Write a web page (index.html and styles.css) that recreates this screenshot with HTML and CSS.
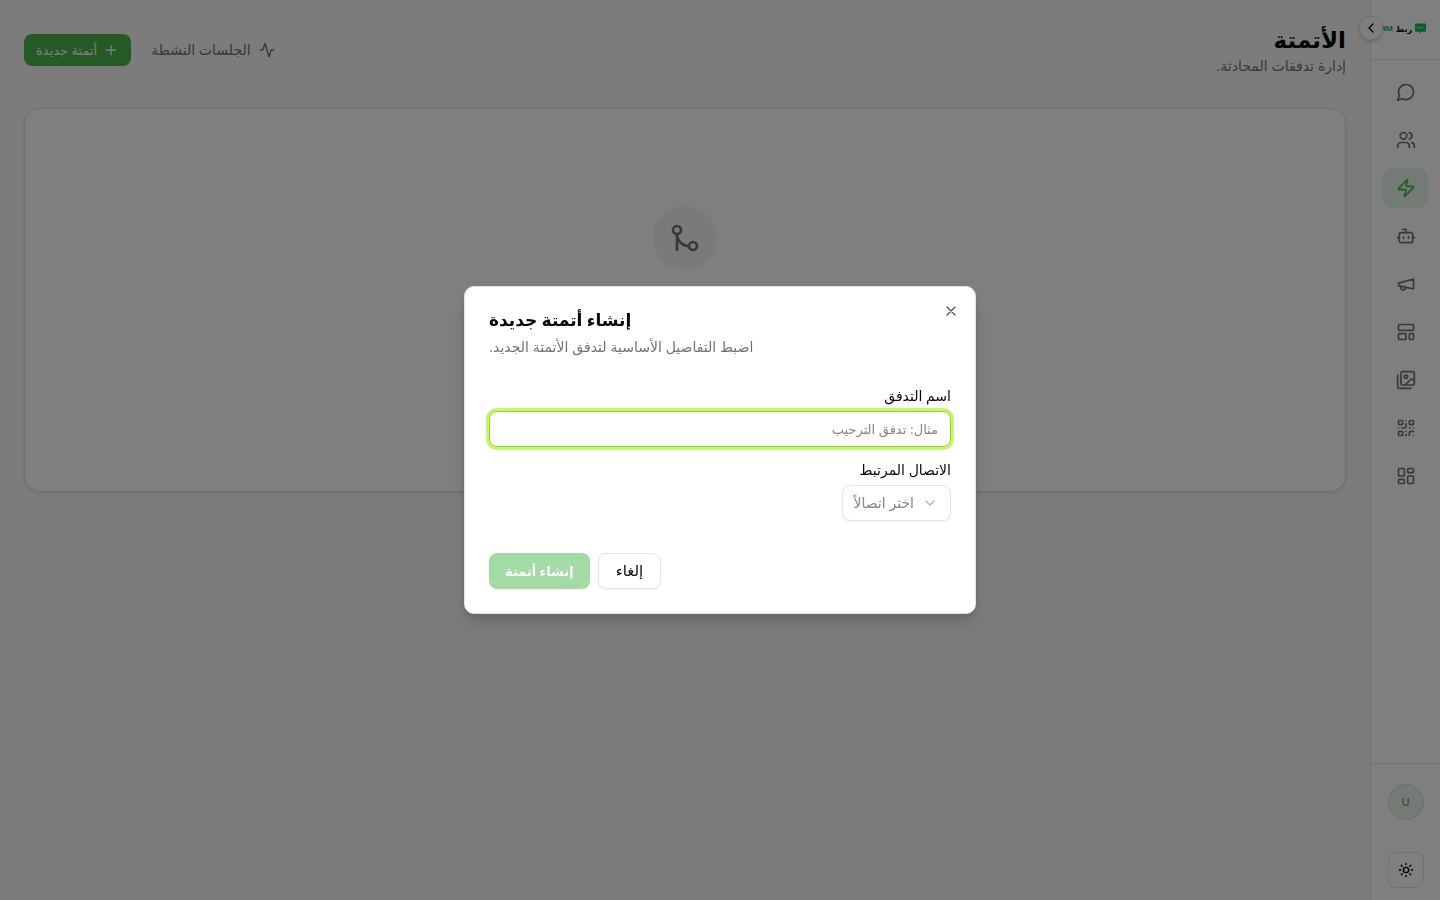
FILE: index.html
```html
<!DOCTYPE html>
<html lang="ar" dir="rtl">
<head>
<meta charset="utf-8">
<title>الأتمتة</title>
<link rel="stylesheet" href="styles.css">
</head>
<body>
<div class="app">
  <aside class="sidebar">
    <div class="brand">
      <svg class="brand-mark" width="11" height="12" viewBox="0 0 12 12"><path fill="#1ab65c" d="M1 0h10a1 1 0 0 1 1 1v7a1 1 0 0 1-1 1H6.500L4.500 11.500V9H1a1 1 0 0 1-1-1V1a1 1 0 0 1 1-1z"/><path stroke="#d8f5e3" stroke-width="1.500" stroke-dasharray="1.500 1" d="M2.500 4.500h7"/></svg>
      <span class="brand-name">ربط</span><span class="brand-suffix" dir="ltr">CRM</span>
    </div>
    <button class="collapse" aria-label="توسيع"><svg class="icon" width="16" height="16" viewBox="0 0 24 24"><path d="m15 18-6-6 6-6"/></svg></button>
    <nav class="nav">
      <a href="#" class="nav-item" aria-label="المحادثات"><svg class="icon" width="20" height="20" viewBox="0 0 24 24"><path d="M7.900 20A9 9 0 1 0 4 16.100L2 22Z"/></svg></a>
      <a href="#" class="nav-item" aria-label="جهات الاتصال"><svg class="icon" width="20" height="20" viewBox="0 0 24 24"><path d="M16 21v-2a4 4 0 0 0-4-4H6a4 4 0 0 0-4 4v2"/><circle cx="9" cy="7" r="4"/><path d="M22 21v-2a4 4 0 0 0-3-3.870M16 3.130a4 4 0 0 1 0 7.750"/></svg></a>
      <a href="#" class="nav-item active" aria-label="الأتمتة"><svg class="icon" width="20" height="20" viewBox="0 0 24 24"><path d="M4 14a1 1 0 0 1-.780-1.630l9.900-10.200a.5.5 0 0 1 .860.460l-1.920 6.020A1 1 0 0 0 13 10h7a1 1 0 0 1 .780 1.630l-9.900 10.200a.5.5 0 0 1-.860-.460l1.920-6.020A1 1 0 0 0 11 14z"/></svg></a>
      <a href="#" class="nav-item" aria-label="الروبوت"><svg class="icon" width="20" height="20" viewBox="0 0 24 24"><path d="M12 8V4H8"/><rect width="16" height="12" x="4" y="8" rx="2"/><path d="M2 14h2M20 14h2M15 13v2M9 13v2"/></svg></a>
      <a href="#" class="nav-item" aria-label="الحملات"><svg class="icon" width="20" height="20" viewBox="0 0 24 24"><path d="m3 11 18-5v12L3 14v-3z"/><path d="M11.600 16.800a3 3 0 1 1-5.800-1.600"/></svg></a>
      <a href="#" class="nav-item" aria-label="القوالب"><svg class="icon" width="20" height="20" viewBox="0 0 24 24"><rect width="18" height="7" x="3" y="3" rx="1"/><rect width="9" height="7" x="3" y="14" rx="1"/><rect width="5" height="7" x="16" y="14" rx="1"/></svg></a>
      <a href="#" class="nav-item" aria-label="الوسائط"><svg class="icon" width="20" height="20" viewBox="0 0 24 24"><path d="M18 22H4a2 2 0 0 1-2-2V6"/><path d="m22 13-1.296-1.296a2.410 2.410 0 0 0-3.408 0L11 18"/><circle cx="12" cy="8" r="2"/><rect width="16" height="16" x="6" y="2" rx="2"/></svg></a>
      <a href="#" class="nav-item" aria-label="رمز الاستجابة"><svg class="icon" width="20" height="20" viewBox="0 0 24 24"><rect width="5" height="5" x="3" y="3" rx="1"/><rect width="5" height="5" x="16" y="3" rx="1"/><rect width="5" height="5" x="3" y="16" rx="1"/><path d="M21 16h-3a2 2 0 0 0-2 2v3M21 21v.01M12 7v3a2 2 0 0 1-2 2H7M3 12h.01M12 3h.01M12 16v.01M16 12h1M21 12v.01M12 21v-1"/></svg></a>
      <a href="#" class="nav-item" aria-label="لوحة التحكم"><svg class="icon" width="20" height="20" viewBox="0 0 24 24"><rect width="7" height="9" x="3" y="3" rx="1"/><rect width="7" height="5" x="14" y="3" rx="1"/><rect width="7" height="9" x="14" y="12" rx="1"/><rect width="7" height="5" x="3" y="16" rx="1"/></svg></a>
    </nav>
    <div class="side-footer">
      <button class="avatar">U</button>
      <button class="theme" aria-label="المظهر"><svg class="icon" width="16" height="16" viewBox="0 0 24 24"><circle cx="12" cy="12" r="4"/><path d="M12 2v2M12 20v2m-7.070-17.070 1.410 1.410M17.660 17.660l1.410 1.410M2 12h2M20 12h2M6.340 17.660l-1.410 1.410M19.070 4.930l-1.410 1.410"/></svg></button>
    </div>
  </aside>
  <main class="main">
    <header class="page-header">
      <div>
        <h1 class="page-title">الأتمتة</h1>
        <p class="page-sub">إدارة تدفقات المحادثة.</p>
      </div>
      <div class="actions">
        <button class="btn-ghost"><svg class="icon" width="16" height="16" viewBox="0 0 24 24"><path d="M22 12h-2.480a2 2 0 0 0-1.930 1.460l-2.350 8.360a.25.25 0 0 1-.480 0L9.240 2.180a.25.25 0 0 0-.480 0l-2.350 8.360A2 2 0 0 1 4.490 12H2"/></svg>الجلسات النشطة</button>
        <button class="btn-new"><svg class="icon" width="16" height="16" viewBox="0 0 24 24"><path d="M5 12h14M12 5v14"/></svg>أتمتة جديدة</button>
      </div>
    </header>
    <section class="card">
      <div class="empty-icon"><svg class="icon" width="32" height="32" viewBox="0 0 24 24"><circle cx="18" cy="18" r="3"/><circle cx="6" cy="6" r="3"/><path d="M6 21V9a9 9 0 0 0 9 9"/></svg></div>
    </section>
  </main>
</div>
<div class="overlay">
  <form class="dialog" role="dialog" aria-labelledby="dialog-title">
    <button type="button" class="close" aria-label="إغلاق"><svg class="icon" width="16" height="16" viewBox="0 0 24 24"><path d="M18 6 6 18M6 6l12 12"/></svg></button>
    <div class="dialog-head">
      <h2 class="dialog-title" id="dialog-title">إنشاء أتمتة جديدة</h2>
      <p class="dialog-desc">اضبط التفاصيل الأساسية لتدفق الأتمتة الجديد.</p>
    </div>
    <div class="fields">
      <div class="field">
        <label class="label" for="flow-name">اسم التدفق</label>
        <input class="input" id="flow-name" type="text" placeholder="مثال: تدفق الترحيب">
      </div>
      <div class="field">
        <label class="label" for="connection">الاتصال المرتبط</label>
        <div class="select-wrap">
          <select class="select" id="connection"><option>اختر اتصالاً</option></select>
          <svg class="icon chevron" width="16" height="16" viewBox="0 0 24 24"><path d="m6 9 6 6 6-6"/></svg>
        </div>
      </div>
    </div>
    <div class="dialog-actions">
      <button type="button" class="btn-cancel">إلغاء</button>
      <button type="submit" class="btn-create" disabled>إنشاء أتمتة</button>
    </div>
  </form>
</div>
</body>
</html>
```
FILE: styles.css
```css
*, *::before, *::after { box-sizing: border-box; }
body {
  margin: 0;
  font-family: Inter, "DejaVu Sans", sans-serif;
  font-size: 14px;
  line-height: 20px;
  color: #09090b;
  background: #f8f8f8;
}
h1, h2, p { margin: 0; }
button, input, select { font: inherit; color: inherit; margin: 0; }
button { display: inline-flex; align-items: center; justify-content: center; padding: 0; border: 0; background: none; }
.icon { flex: none; fill: none; stroke: currentColor; stroke-width: 2; stroke-linecap: round; stroke-linejoin: round; }

.app { display: flex; min-height: 100vh; }
.sidebar { position: relative; display: flex; flex-direction: column; flex: none; width: 70px; background: #fff; border-left: 1px solid #e4e4e7; }
.brand { display: flex; align-items: center; gap: 3px; height: 60px; padding: 0 14px 2px 0; border-bottom: 1px solid #e4e4e7; font-size: 8px; font-weight: 700; }
.brand-mark { flex: none; }
.brand-suffix { color: #1ab65c; font-family: Roboto, sans-serif; }
.collapse { position: absolute; top: 16px; left: -12px; width: 24px; height: 24px; border: 1px solid #e4e4e7; border-radius: 50%; background: #fff; box-shadow: 0 2px 4px rgba(0, 0, 0, .15); }
.nav { display: flex; flex: 1; flex-direction: column; gap: 8px; padding: 12px; }
.nav-item { display: flex; align-items: center; justify-content: center; height: 40px; border-radius: 10px; color: #71717a; }
.nav-item.active { background: #e9f5ea; color: #47b64b; }
.side-footer { display: flex; flex-direction: column; align-items: center; gap: 32px; padding: 20px 12px 12px; border-top: 1px solid #e4e4e7; }
.avatar { width: 36px; height: 36px; border: 1px solid #dcdfdc; border-radius: 50%; background: #e9f5ea; color: #47b64b; font-size: 11px; font-weight: 500; }
.theme { width: 36px; height: 36px; border: 1px solid #e4e4e7; border-radius: 8px; }

.main { flex: 1; min-width: 0; padding: 24px; }
.page-header { display: flex; align-items: center; justify-content: space-between; height: 52px; margin-bottom: 32px; }
.page-title { font-size: 23px; line-height: 32px; font-weight: 700; }
.page-sub { color: #71717a; }
.actions { display: flex; align-items: center; gap: 8px; }
.btn-ghost, .btn-new { height: 32px; padding: 0 12px; border-radius: 8px; font-weight: 500; }
.btn-ghost { gap: 8px; color: #71717a; }
.btn-new { gap: 6px; background: #4ab54e; color: #fafafa; font-size: 13px; }
.card { display: flex; flex-direction: column; align-items: center; min-height: 384px; padding-top: 97px; border: 1px solid #e4e4e7; border-radius: 16px; background: #fff; box-shadow: 0 1px 3px rgba(0, 0, 0, .1); }
.empty-icon { display: flex; align-items: center; justify-content: center; width: 64px; height: 64px; border-radius: 50%; background: #f4f4f5; color: #71717a; }

.overlay { position: fixed; inset: 0; display: flex; align-items: center; justify-content: center; background: rgba(0, 0, 0, .5); }
.dialog { position: relative; display: flex; flex-direction: column; gap: 32px; width: 512px; padding: 24px; border: 1px solid #e4e4e7; border-radius: 10px; background: #fff; box-shadow: 0 10px 15px rgba(0, 0, 0, .1), 0 4px 6px rgba(0, 0, 0, .1); }
.close { position: absolute; top: 16px; right: 16px; width: 16px; height: 16px; color: #555; }
.dialog-head { display: flex; flex-direction: column; gap: 8px; text-align: left; }
.dialog-title { font-size: 17px; line-height: 18px; font-weight: 600; }
.dialog-desc { color: #71717a; }
.fields { display: flex; flex-direction: column; gap: 16px; }
.field { display: flex; flex-direction: column; align-items: flex-start; gap: 8px; }
.label { line-height: 14px; font-weight: 500; }
.input { width: 100%; height: 36px; padding: 0 12px; border: 1px solid #93dc14; border-radius: 8px; outline: 0; background: #fff; box-shadow: 0 0 0 3px #c9f17e; font-size: 13px; }
.input::placeholder { color: #84848c; opacity: 1; }
.select-wrap { position: relative; }
.select { appearance: none; height: 36px; padding: 0 36px 0 10px; border: 1px solid #e4e4e7; border-radius: 8px; background: #fff; color: #84848c; box-shadow: 0 1px 2px rgba(0, 0, 0, .05); }
.chevron { position: absolute; top: 10px; right: 13px; color: #b0b0b5; pointer-events: none; }
.dialog-actions { display: flex; flex-direction: row; justify-content: flex-end; gap: 8px; }
.btn-cancel, .btn-create { height: 36px; padding: 0 16px; border-radius: 8px; font-weight: 500; }
.btn-cancel { padding: 0 17px; border: 1px solid #e4e4e7; box-shadow: 0 1px 2px rgba(0, 0, 0, .05); font-size: 15px; }
.btn-create { background: #a4daa6; color: #fcfefc; font-size: 13px; font-weight: 600; }
```
